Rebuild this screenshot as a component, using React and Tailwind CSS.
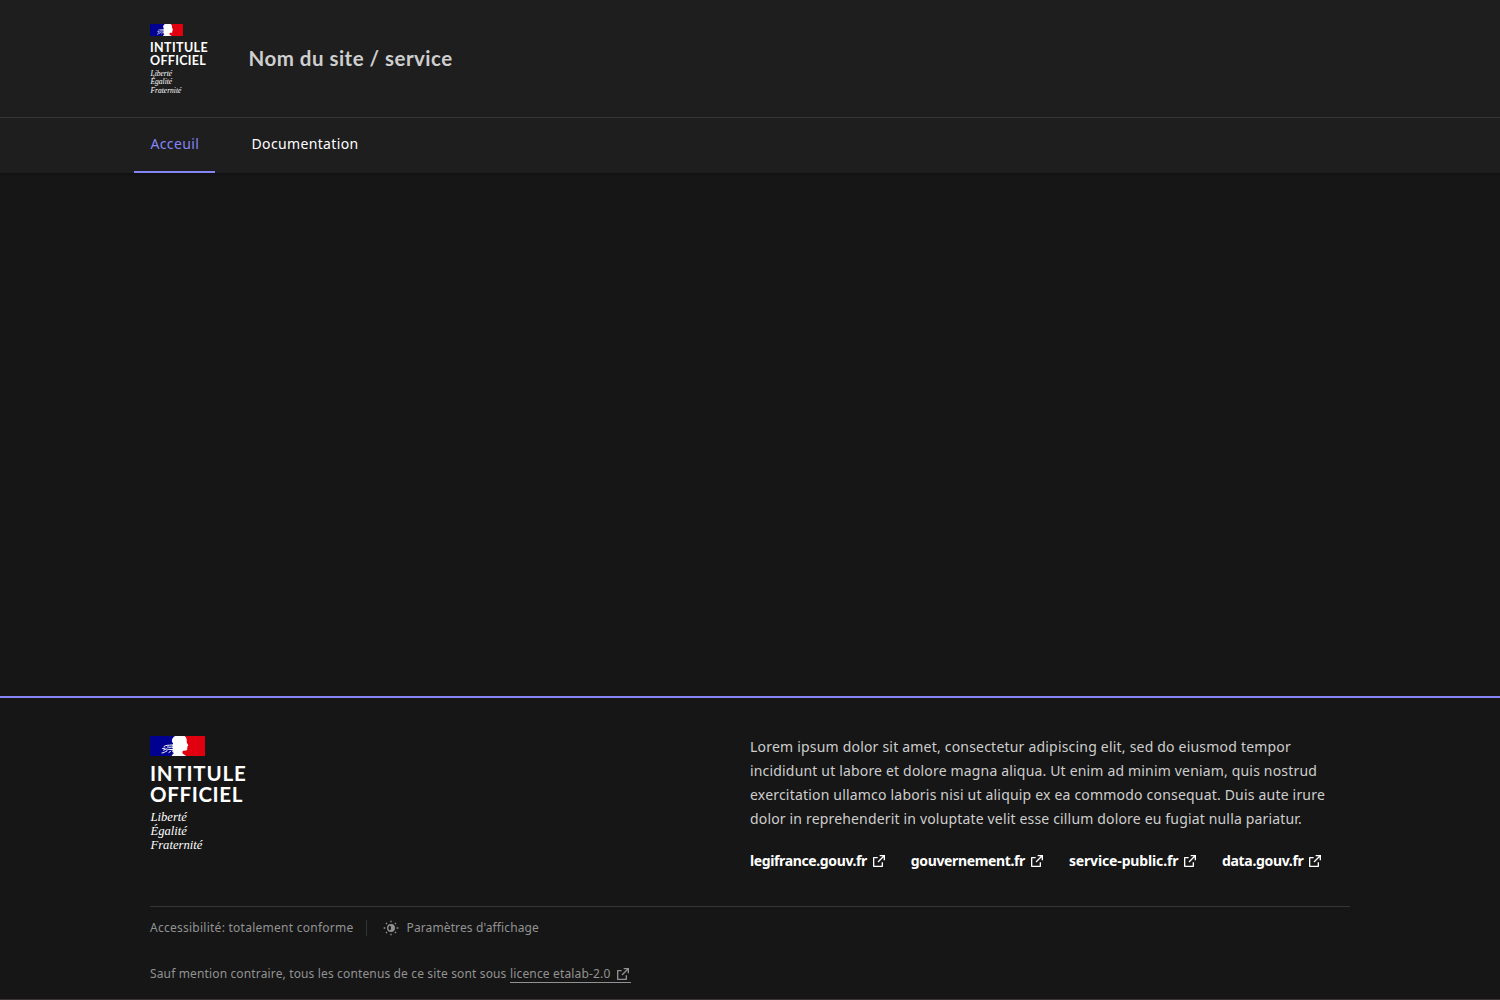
import React from "react";

function Flag({ className }) {
  return (
    <svg viewBox="0 0 55 20" className={className} aria-hidden="true">
      <rect width="25" height="20" fill="#000091" />
      <rect x="30" width="25" height="20" fill="#e1000f" />
      <path
        fill="#fff"
        d="M25 0H34.6C35.8 .9 36.5 2 36.7 3.6C36.9 4.8 36.5 5.6 36.9 6.7L38.2 9.2C38.4 9.8 37.8 10 37.4 10.2L37.5 11.4L37.1 12L37.3 13.3C37.1 14.7 35.6 14.7 33.9 14.6C32.6 15.1 32.1 16.2 32.5 17.2C33.2 18.1 34.8 18.8 36.2 20H21.6C22.3 18.8 23.4 18 24 16.8L22.4 17.3L23.6 15.7L21.8 15.9L23 14.4L21.2 14.2L22.9 12.6L21.7 11.6L23 10.4L21.9 9.3L23.1 7.6L21.9 5.4C21.7 3.1 23 1.2 25 0Z"
      />
      <path
        fill="none"
        stroke="#fff"
        strokeWidth="1"
        d="M13.6 10.8C15.8 8.8 18.6 9.4 22.4 9M17 10.9L20 11.3L22.6 10.9M12.2 12.6L15.4 12.1M13.2 14.3L17.3 12.6M11.6 17C13.8 17.1 14.7 15.7 16.9 15.1M16.6 14.4L18.8 13.3L22 13.6M18.6 16.6L20.8 15.3"
      />
    </svg>
  );
}

function ExternalIcon({ className }) {
  return (
    <svg viewBox="0 0 24 24" fill="currentColor" className={className} aria-hidden="true">
      <path d="M10 6v2H5v11h11v-5h2v6a1 1 0 0 1-1 1H4a1 1 0 0 1-1-1V7a1 1 0 0 1 1-1h6Zm11-3v8h-2V6.413l-7.793 7.794-1.414-1.414L17.585 5H13V3h8Z" />
    </svg>
  );
}

function ThemeIcon({ className }) {
  return (
    <svg viewBox="0 0 24 24" fill="currentColor" className={className} aria-hidden="true">
      <path d="M12 6a6 6 0 1 1 0 12 6 6 0 0 1 0-12Zm0 2a4 4 0 0 0-1.6 7.66C11.6 14.8 12 13.5 12 12s-.4-2.8-1.6-3.66A4 4 0 0 1 12 8Z" fillRule="evenodd" />
      <path d="M11 1h2v2.5h-2zM11 20.5h2V23h-2zM1 11h2.5v2H1zM20.5 11H23v2h-2.5zM3.8 5.2l1.4-1.4L6.7 5.3 5.3 6.7zM17.3 18.7l1.4-1.4 1.5 1.5-1.4 1.4zM17.3 5.3l1.5-1.5 1.4 1.4-1.5 1.5zM3.8 18.8l1.5-1.5 1.4 1.4-1.5 1.5z" />
    </svg>
  );
}

const links = [
  ["legifrance.gouv.fr", "w-[117px] tracking-[-0.372px]"],
  ["gouvernement.fr", "w-[114.3px] tracking-[-0.36px]"],
  ["service-public.fr", "w-[109.3px] tracking-[-0.14px]"],
  ["data.gouv.fr", "w-[81.3px] tracking-[-0.323px]"],
];

export default function App() {
  return (
    <div className="flex h-[1000px] flex-col overflow-hidden bg-[#161616] font-['Noto_Sans',sans-serif] text-[#cecece]">
      <header className="shrink-0 bg-[#1e1e1e] shadow-[0_1px_3px_rgba(0,0,18,0.32)]">
        <div className="h-[118px] border-b border-[#353535]">
          <div className="mx-auto flex w-[1200px] pt-6">
            <div className="w-[98.5px]">
              <Flag className="h-3 w-[33px]" />
              <p className="mt-[5px] font-['Lato',sans-serif] text-[12.5px] leading-[13px] font-bold text-white">
                <span className="block tracking-[0.38px]">INTITULE</span>
                <span className="block tracking-[0.3px]">OFFICIEL</span>
              </p>
              <p className="mt-[3px] pl-[0.5px] font-['Liberation_Serif',serif] text-[7.5px] leading-[8.4px] text-white italic">
                Liberté<br />Égalité<br />Fraternité
              </p>
            </div>
            <p className="mt-5 font-['Lato',sans-serif] text-[20.5px] leading-7 font-bold tracking-[0.48px]">
              Nom du site / service
            </p>
          </div>
        </div>
        <nav className="mx-auto flex h-[55px] w-[1232px] text-sm text-white">
          <a className="h-[55px] w-[81px] border-b-2 border-[#8585f6] pt-4 pl-[16.5px] leading-5 tracking-[0.349px] text-[#8585f6]">Acceuil</a>
          <a className="ml-5 pt-4 pl-[16.5px] leading-5 tracking-[0.354px]">Documentation</a>
        </nav>
      </header>

      <main className="grow" />

      <footer className="h-[304px] shrink-0 border-t-2 border-[#8585f6]">
        <div className="mx-auto w-[1200px] pt-[38px]">
          <div className="flex h-[170px]">
            <div className="w-[600px]">
              <Flag className="h-5 w-[55px]" />
              <p className="mt-[7px] font-['Lato',sans-serif] text-[20.5px] leading-[21px] font-bold text-white">
                <span className="block tracking-[0.78px]">INTITULE</span>
                <span className="block tracking-[0.64px]">OFFICIEL</span>
              </p>
              <p className="mt-[5px] pl-[0.5px] font-['Liberation_Serif',serif] text-[12.6px] leading-[14px] text-white italic">
                Liberté<br />Égalité<br />Fraternité
              </p>
            </div>
            <div className="-mt-px w-[600px]">
              <p className="text-sm leading-6 whitespace-nowrap">
                <span className="block tracking-[0.201px]">Lorem ipsum dolor sit amet, consectetur adipiscing elit, sed do eiusmod tempor</span>
                <span className="block tracking-[0.173px]">incididunt ut labore et dolore magna aliqua. Ut enim ad minim veniam, quis nostrud</span>
                <span className="block tracking-[0.194px]">exercitation ullamco laboris nisi ut aliquip ex ea commodo consequat. Duis aute irure</span>
                <span className="block tracking-[0.167px]">dolor in reprehenderit in voluptate velit esse cillum dolore eu fugiat nulla pariatur.</span>
              </p>
              <div className="mt-[18px] flex gap-6 text-sm leading-6 font-bold whitespace-nowrap text-white">
                {links.map(([label, cls]) => (
                  <a key={label} className="flex items-center">
                    <span className={cls}>{label}</span>
                    <ExternalIcon className="ml-[3.8px] size-4" />
                  </a>
                ))}
              </div>
            </div>
          </div>
          <div className="flex h-[46px] border-t border-[#353535] pt-[11px] text-xs leading-5 text-[#929292]">
            <span className="w-[216px] tracking-[0.256px]">Accessibilité: totalement conforme</span>
            <span className="mt-0.5 h-4 w-px bg-[#353535]" />
            <span className="ml-4 flex h-5 items-center">
              <ThemeIcon className="size-4" />
              <span className="ml-[7.5px] tracking-[0.12px]">Paramètres d'affichage</span>
            </span>
          </div>
          <p className="mt-[13px] flex h-5 text-xs leading-[18px] whitespace-nowrap text-[#929292]">
            <span className="w-[360px] tracking-[0.143px]">Sauf mention contraire, tous les contenus de ce site sont sous</span>
            <a className="flex h-[18px] w-[121px] items-center border-b border-[#929292]">
              <span className="w-[101px] tracking-[0.159px]">licence etalab-2.0</span>
              <ExternalIcon className="ml-1 size-4" />
            </a>
          </p>
        </div>
        <div className="mt-[14px] h-px bg-[#3a3434]" />
      </footer>
    </div>
  );
}
